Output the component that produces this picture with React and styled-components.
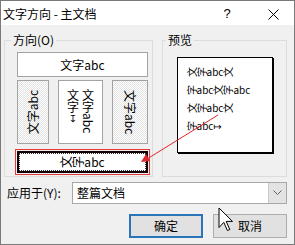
import React from "react";
import styled, { createGlobalStyle } from "styled-components";

const Global = createGlobalStyle`
  html, body { margin: 0; padding: 0; background: #fff; }
  body {
    font-family: "Noto Sans CJK SC", "Noto Sans", "DejaVu Sans", sans-serif;
    font-size: 12px;
    color: #000;
  }
`;

const Window = styled.div`
  position: relative;
  width: 295px;
  height: 245px;
  box-sizing: border-box;
  border: 1px solid #7a7a7a;
  background: #f0f0f0;
  display: flex;
  flex-direction: column;
  overflow: hidden;
`;

const TitleBar = styled.div`
  height: 24px;
  box-sizing: border-box;
  padding: 2px 11px 0 2px;
  background: #fff;
  display: flex;
  align-items: center;
  line-height: 14px;
`;

const Title = styled.div`
  flex: 1;
`;

const TitleButton = styled.div`
  width: 20px;
  margin-left: ${(p) => p.$ml || 0}px;
  display: flex;
  align-items: center;
  justify-content: center;
  font-family: "Liberation Sans", sans-serif;
  font-size: 13px;
`;

const Body = styled.div`
  flex: 1;
  display: flex;
  flex-direction: column;
  padding: 9px 7px 0 3px;
`;

const Groups = styled.div`
  display: flex;
  gap: 9px;
`;

const Group = styled.fieldset`
  margin: 0;
  padding: 0;
  min-width: 0;
  box-sizing: border-box;
  width: ${(p) => p.$w}px;
  height: 143px;
  border: 1px solid #dcdcdc;
`;

const Legend = styled.legend`
  padding: 0 2px;
  margin-left: ${(p) => p.$ml}px;
  line-height: 12px;
  font-size: 12px;
`;

const GroupContent = styled.div`
  display: flex;
  flex-direction: column;
  padding: ${(p) => p.$pad};
  align-items: ${(p) => p.$align || "stretch"};
`;

const HButton = styled.div`
  height: 25px;
  box-sizing: border-box;
  border: 1px solid #a3a3a3;
  background: #fff;
  display: flex;
  align-items: center;
  justify-content: center;
  line-height: 14px;
`;

const VRow = styled.div`
  margin-top: 3px;
  display: flex;
  gap: 9px;
  height: 64px;
`;

const VButton = styled.div`
  width: ${(p) => p.$w}px;
  box-sizing: border-box;
  border: 1px solid #a3a3a3;
  background: ${(p) =>
    p.$dither
      ? "repeating-conic-gradient(#ffffff 0 25%, #e2e2e2 0 50%) 0 0 / 2px 2px"
      : "#fff"};
  display: flex;
  align-items: ${(p) => (p.$top ? "flex-start" : "center")};
  justify-content: center;
  padding-top: ${(p) => (p.$top ? "8px" : "0")};
`;

const SideText = styled.div`
  writing-mode: vertical-rl;
  text-orientation: sideways;
  line-height: 14px;
  transform: ${(p) => (p.$up ? "rotate(180deg)" : "none")};
`;

const VertText = styled.div`
  writing-mode: vertical-rl;
  text-orientation: mixed;
  line-height: 15px;
`;

const Upright = styled.span`
  text-orientation: upright;
  font-family: "DejaVu Sans", sans-serif;
  font-size: 10px;
`;

const Selected = styled.div`
  margin-top: 7px;
  height: 22px;
  box-sizing: border-box;
  border: 2px solid #140000;
  background: #fff;
  outline: 1px solid #e23a3a;
  outline-offset: 1px;
  display: flex;
`;

const FocusRect = styled.div`
  flex: 1;
  border: 1px dotted #333;
  display: flex;
  align-items: center;
  justify-content: center;
  line-height: 14px;
`;

const RotChar = styled.span`
  display: inline-block;
  transform: rotate(-90deg);
`;

const PreviewBox = styled.div`
  width: 96px;
  height: 96px;
  box-sizing: border-box;
  border: 1px solid #000;
  box-shadow: 1px 1px 0 #000;
  background: #fff;
  padding: 5px 0 0 9px;
  font-size: 10px;
  line-height: 18px;
  white-space: nowrap;
`;

const PreviewLine = styled.div`
  height: 18px;
`;

const ApplyRow = styled.div`
  margin-top: 5px;
  display: flex;
  align-items: center;
`;

const Label = styled.div`
  margin-left: 3px;
  line-height: 14px;
`;

const Combo = styled.div`
  margin-left: auto;
  width: 215px;
  height: 22px;
  box-sizing: border-box;
  border: 1px solid #a8a8a8;
  background: #fff;
  display: flex;
`;

const ComboText = styled.div`
  flex: 1;
  padding-left: 4px;
  display: flex;
  align-items: center;
  line-height: 14px;
`;

const ComboArrow = styled.div`
  width: 17px;
  background: #e3e3e3;
  border-left: 1px solid #c8c8c8;
  display: flex;
  align-items: center;
  justify-content: center;
`;

const ButtonRow = styled.div`
  margin-top: 10px;
  display: flex;
  justify-content: flex-end;
  gap: 10px;
`;

const Button = styled.div`
  width: 74px;
  height: 24px;
  box-sizing: border-box;
  background: #e1e1e1;
  border: ${(p) => (p.$default ? "2px solid #2a74b8" : "1px solid #adadad")};
  display: flex;
  align-items: center;
  justify-content: center;
  line-height: 14px;
`;

const Overlay = styled.svg`
  position: absolute;
  left: ${(p) => p.$x}px;
  top: ${(p) => p.$y}px;
  pointer-events: none;
`;

const isCJK = (c) => /[\u3400-\u9fff]/.test(c);

function Mixed({ text }) {
  return (
    <>
      {Array.from(text).map((c, i) =>
        isCJK(c) ? <RotChar key={i}>{c}</RotChar> : <React.Fragment key={i}>{c}</React.Fragment>
      )}
    </>
  );
}

export default function App() {
  return (
    <>
      <Global />
      <Window>
        <TitleBar>
          <Title>文字方向 - 主文档</Title>
          <TitleButton>?</TitleButton>
          <TitleButton $ml={26}>
            <svg width="11" height="11" viewBox="0 0 11 11">
              <path d="M0.5 0.5 L10.5 10.5 M10.5 0.5 L0.5 10.5" stroke="#000" strokeWidth="1" fill="none" />
            </svg>
          </TitleButton>
        </TitleBar>
        <Body>
          <Groups>
            <Group $w={149}>
              <Legend $ml={6}>方向(O)</Legend>
              <GroupContent $pad="6px 4px 0 12px">
                <HButton>文字abc</HButton>
                <VRow>
                  <VButton $w={32} $dither>
                    <SideText $up>文字abc</SideText>
                  </VButton>
                  <VButton $w={45} $top>
                    <VertText>
                      文字abc
                      <br />
                      文字<Upright>↧</Upright>
                    </VertText>
                  </VButton>
                  <VButton $w={36} $dither>
                    <SideText>文字abc</SideText>
                  </VButton>
                </VRow>
                <Selected>
                  <FocusRect>
                    <Mixed text="文字abc" />
                  </FocusRect>
                </Selected>
              </GroupContent>
            </Group>
            <Group $w={125}>
              <Legend $ml={3}>预览</Legend>
              <GroupContent $pad="11px 0 0 0" $align="center">
                <PreviewBox>
                  <PreviewLine><Mixed text="文字abc文" /></PreviewLine>
                  <PreviewLine><Mixed text="字abc文字abc" /></PreviewLine>
                  <PreviewLine><Mixed text="文字abc文" /></PreviewLine>
                  <PreviewLine><Mixed text="字abc" />↦</PreviewLine>
                </PreviewBox>
              </GroupContent>
            </Group>
          </Groups>
          <ApplyRow>
            <Label>应用于(Y):</Label>
            <Combo>
              <ComboText>整篇文档</ComboText>
              <ComboArrow>
                <svg width="9" height="6" viewBox="0 0 9 6">
                  <path d="M0.5 0.5 L4.5 4.5 L8.5 0.5" stroke="#606060" strokeWidth="1" fill="none" />
                </svg>
              </ComboArrow>
            </Combo>
          </ApplyRow>
          <ButtonRow>
            <Button $default>确定</Button>
            <Button>取消</Button>
          </ButtonRow>
        </Body>
        <Overlay $x={138} $y={110} width="84" height="56" viewBox="138 110 84 56">
          <line x1="217" y1="114" x2="146" y2="158" stroke="#e0262b" strokeWidth="1" />
          <polygon points="140,161 149,160 145,153" fill="#e0262b" />
        </Overlay>
        <Overlay $x={217} $y={206} width="16" height="26" viewBox="0 0 16 26">
          <polygon
            points="1,1 1,20.5 5.8,15.4 9.4,23.5 11.8,22.5 8.2,14.4 14.5,14.4"
            fill="#fff"
            stroke="#000"
            strokeWidth="1"
            strokeLinejoin="miter"
          />
        </Overlay>
      </Window>
    </>
  );
}
